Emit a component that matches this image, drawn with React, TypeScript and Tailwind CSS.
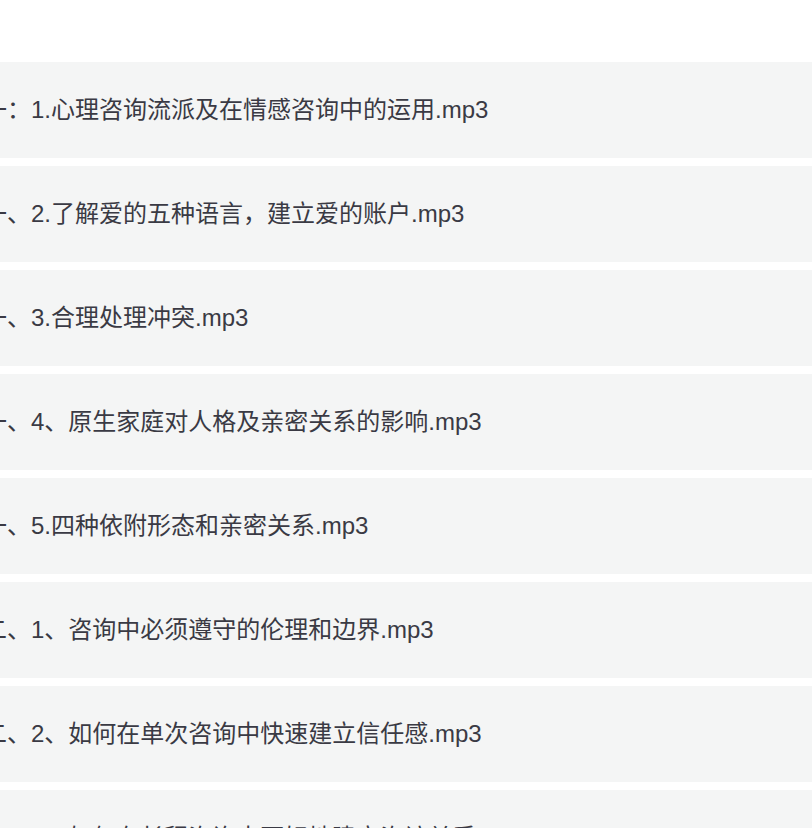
const TRACKS = [
  "一：1.心理咨询流派及在情感咨询中的运用.mp3",
  "一、2.了解爱的五种语言，建立爱的账户.mp3",
  "一、3.合理处理冲突.mp3",
  "一、4、原生家庭对人格及亲密关系的影响.mp3",
  "一、5.四种依附形态和亲密关系.mp3",
  "二、1、咨询中必须遵守的伦理和边界.mp3",
  "二、2、如何在单次咨询中快速建立信任感.mp3",
  "二、3、如何在长程咨询中更好地建立咨访关系.mp3",
];

export default function App() {
  return (
    <div className="h-[828px] w-[812px] overflow-hidden bg-white pt-[62px] font-['Liberation_Sans','Noto_Sans_CJK_SC',sans-serif]">
      <ul className="flex flex-col gap-2">
        {TRACKS.map((t) => (
          <li key={t} className="flex h-[96px] shrink-0 items-center bg-[#f4f5f5]">
            <span className="-ml-[17px] whitespace-nowrap text-[24px] leading-none text-[#3a3a44]">{t}</span>
          </li>
        ))}
      </ul>
    </div>
  );
}
